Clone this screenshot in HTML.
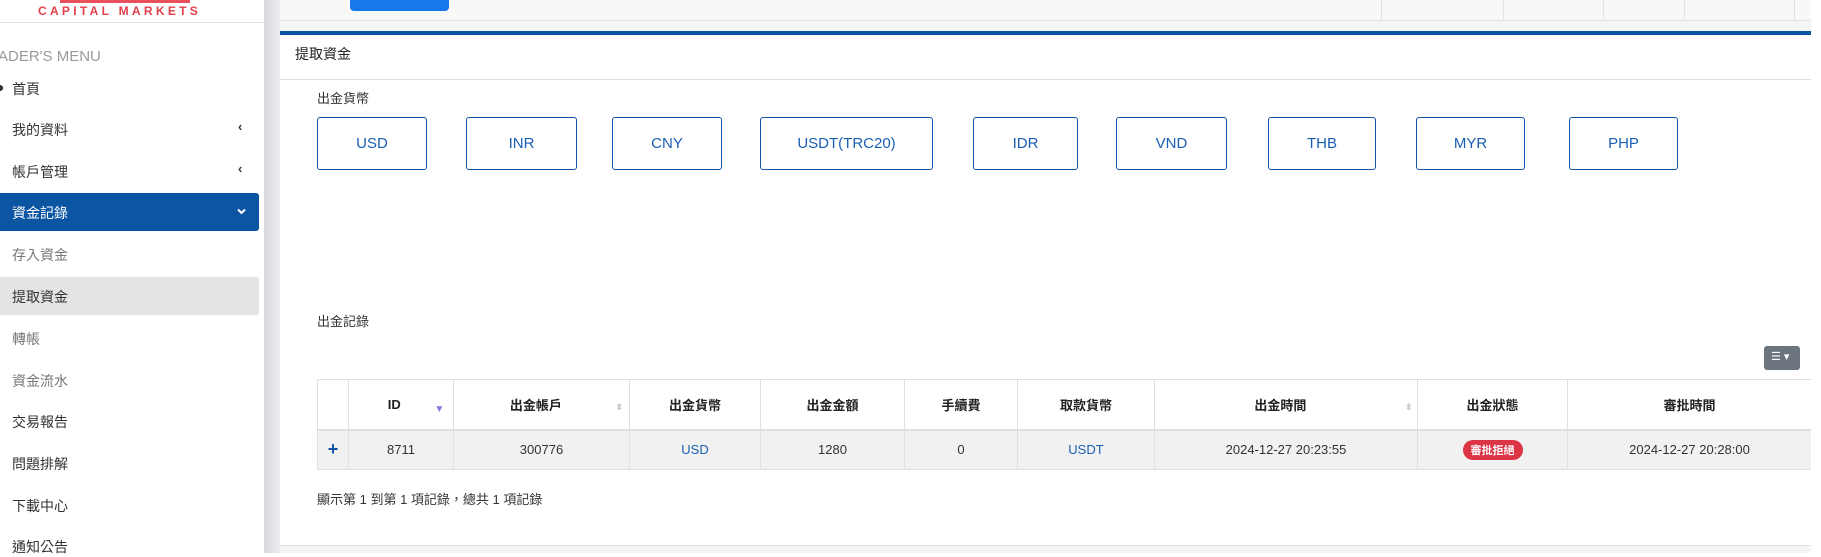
<!DOCTYPE html>
<html><head><meta charset="utf-8"><style>
*{box-sizing:border-box;margin:0;padding:0}
body{width:1821px;height:553px;overflow:hidden;background:#fff;font-family:"Liberation Sans","Noto Sans CJK TC",sans-serif;position:relative;color:#333}
.abs{position:absolute}
#side{left:0;top:0;width:264px;height:553px;background:#fff}
#shadow{left:264px;top:0;width:16px;height:553px;background:linear-gradient(90deg,#d6d7da,#eceef1)}
#main{left:280px;top:0;width:1531px;height:553px;background:#f4f5f7}
.mi{position:absolute;left:12px;font-size:14px;color:#333}
.sub{color:#777}
.cur{position:absolute;top:117px;height:53px;border:1.5px solid #1255a6;border-radius:3px;color:#1a5fb4;font-size:15px;display:flex;align-items:center;justify-content:center;background:#fff}
#tw{position:absolute;left:317px;top:379px;width:1494px;overflow:hidden}
table{border-collapse:collapse;font-size:13px;table-layout:fixed;width:1494px}
th,td{border:1px solid #dde0e4;text-align:center;padding:0;white-space:nowrap}
th{height:50px;font-weight:bold;color:#222;background:#fff}
td{height:40px;background:#f1f1f1;color:#333}
thead tr{border-bottom:2px solid #dde0e4}
</style></head><body>
<div id="side" class="abs">
 <div class="abs" style="left:60px;top:0;width:130px;height:3px;background:#e8505b"></div>
 <div class="abs" style="left:38px;top:4px;font-size:12px;letter-spacing:3.3px;color:#e0404c;font-weight:bold">CAPITAL MARKETS</div>
 <div class="abs" style="left:0;top:22px;width:264px;height:1px;background:#e3e3e3"></div>
 <div class="abs" style="left:-2px;top:48px;font-size:15px;color:#9a9a9a">ADER'S MENU</div>
 <div class="mi" style="top:79px"><span style="position:absolute;left:-16px">●</span>首頁</div>
 <div class="mi" style="top:120px">我的資料</div><div class="abs" style="left:238px;top:119px;font-size:13px;font-weight:bold">‹</div>
 <div class="mi" style="top:162px">帳戶管理</div><div class="abs" style="left:238px;top:161px;font-size:13px;font-weight:bold">‹</div>
 <div class="abs" style="left:0;top:193px;width:259px;height:38px;background:#0c55a3;border-radius:0 3px 3px 0"></div>
 <div class="mi" style="top:203px;color:#fff">資金記錄</div>
 <svg class="abs" style="left:237px;top:208px" width="9" height="7" viewBox="0 0 9 7"><path d="M1 1.5L4.5 5L8 1.5" stroke="#fff" stroke-width="2" fill="none"/></svg>
 <div class="mi sub" style="top:245px">存入資金</div>
 <div class="abs" style="left:0;top:277px;width:259px;height:38px;background:#e4e4e4;border-radius:0 3px 3px 0"></div>
 <div class="mi" style="top:287px">提取資金</div>
 <div class="mi sub" style="top:329px">轉帳</div>
 <div class="mi sub" style="top:371px">資金流水</div>
 <div class="mi" style="top:412px">交易報告</div>
 <div class="mi" style="top:454px">問題排解</div>
 <div class="mi" style="top:496px">下載中心</div>
 <div class="mi" style="top:537px">通知公告</div>
</div>
<div id="shadow" class="abs"></div>
<div id="main" class="abs">
 <div class="abs" style="left:0;top:0;width:1531px;height:21px;background:#f8f8f9;border-bottom:1px solid #e2e3e5"></div>
 <div class="abs" style="left:70px;top:0;width:99px;height:11px;background:#1678ea;border-radius:0 0 4px 4px"></div>
 <div class="abs" style="left:1101px;top:0;width:1px;height:21px;background:#e2e3e5"></div>
 <div class="abs" style="left:1223px;top:0;width:1px;height:21px;background:#e2e3e5"></div>
 <div class="abs" style="left:1323px;top:0;width:1px;height:21px;background:#e2e3e5"></div>
 <div class="abs" style="left:1404px;top:0;width:1px;height:21px;background:#e2e3e5"></div>
 <div class="abs" style="left:1514px;top:0;width:1px;height:21px;background:#e2e3e5"></div>
 <div class="abs" style="left:0;top:31px;width:1531px;height:515px;background:#fff;border-top:4px solid #0c55a3;border-bottom:1px solid #dfe1e4"></div>
 <div class="abs" style="left:0;top:79px;width:1531px;height:1px;background:#e0e0e0"></div>
 <div class="abs" style="left:15px;top:44px;font-size:14px;color:#222">提取資金</div>
</div>
<div class="abs" style="left:317px;top:88px;font-size:13px">出金貨幣</div>
<div class="cur" style="left:317px;width:110px">USD</div>
<div class="cur" style="left:466px;width:111px">INR</div>
<div class="cur" style="left:612px;width:110px">CNY</div>
<div class="cur" style="left:760px;width:173px">USDT(TRC20)</div>
<div class="cur" style="left:973px;width:105px">IDR</div>
<div class="cur" style="left:1116px;width:111px">VND</div>
<div class="cur" style="left:1268px;width:108px">THB</div>
<div class="cur" style="left:1416px;width:109px">MYR</div>
<div class="cur" style="left:1569px;width:109px">PHP</div>
<div class="abs" style="left:317px;top:311px;font-size:13px">出金記錄</div>
<div class="abs" style="left:1764px;top:346px;width:36px;height:24px;background:#6c757d;border-radius:3px;color:#fff;font-size:11px;padding:4px 0 0 7px">☰ ▾</div>
<div id="tw"><table>
<colgroup><col style="width:31px"><col style="width:105px"><col style="width:176px"><col style="width:131px"><col style="width:144px"><col style="width:113px"><col style="width:137px"><col style="width:263px"><col style="width:150px"><col style="width:244px"></colgroup>
<thead><tr>
<th></th>
<th>ID <span style="color:#7b7be0;font-size:10px;position:relative;left:30px;top:3px">▼</span></th>
<th>出金帳戶 <span style="color:#ccc;font-size:9px;position:relative;left:50px">⬍</span></th>
<th>出金貨幣</th>
<th>出金金額</th>
<th>手續費</th>
<th>取款貨幣</th>
<th>出金時間 <span style="color:#ccc;font-size:9px;position:relative;left:95px">⬍</span></th>
<th>出金狀態</th>
<th>審批時間</th>
</tr></thead>
<tbody><tr>
<td style="color:#1255a6;font-weight:bold;font-size:18px">+</td>
<td>8711</td><td>300776</td><td style="color:#1a5fb4">USD</td><td>1280</td><td>0</td><td style="color:#1a5fb4">USDT</td><td>2024-12-27 20:23:55</td>
<td><span style="display:inline-block;background:#dc3545;color:#fff;border-radius:10px;font-size:11px;padding:2px 8px;font-weight:bold">審批拒絕</span></td>
<td>2024-12-27 20:28:00</td>
</tr></tbody>
</table></div>
<div class="abs" style="left:317px;top:489px;font-size:13px">顯示第 1 到第 1 項記錄，總共 1 項記錄</div>
</body></html>
